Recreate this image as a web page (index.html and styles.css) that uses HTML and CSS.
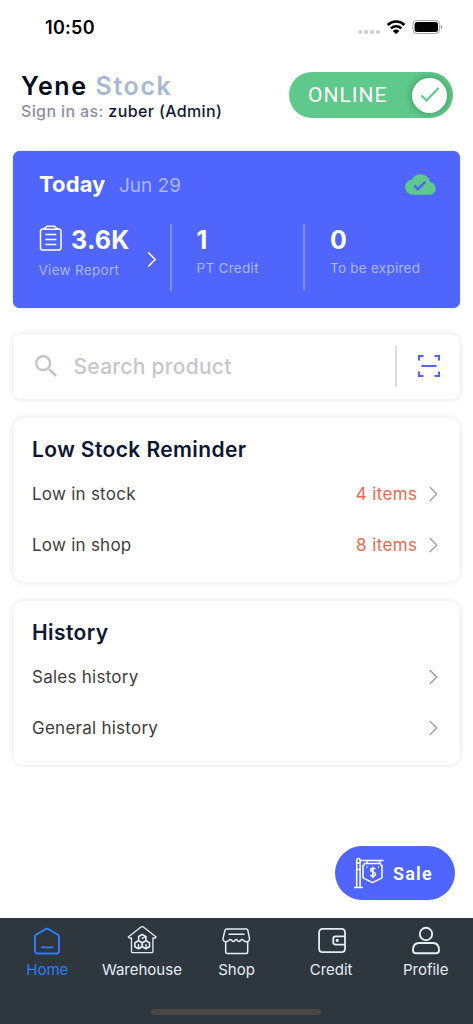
FILE: index.html
```html
<!DOCTYPE html>
<html lang="en">
<head>
<meta charset="utf-8">
<meta name="viewport" content="width=device-width, initial-scale=1">
<title>Yene Stock</title>
<link rel="stylesheet" href="styles.css">
</head>
<body>
<div class="app">
  <div class="status">
    <span class="clock">10:50</span>
    <svg class="status-icons" width="86" height="18" viewBox="0 0 86 18">
      <g fill="#cdcdcd"><circle cx="2.3" cy="14" r="2.1"/><circle cx="8.2" cy="14" r="2.1"/><circle cx="14.1" cy="14" r="2.1"/><circle cx="20" cy="14" r="2.1"/></g>
      <g fill="none" stroke="#000" stroke-width="2.5"><path d="M29.8 7a11.8 11.8 0 0 1 16.600 0"/><path d="M32.900 10.300a7.400 7.400 0 0 1 10.400 0"/></g>
      <path d="M34.800 12.900a4.700 4.700 0 0 1 6.600 0l-3.300 3.200z"/>
      <rect x="54.900" y="2.500" width="26.800" height="13" rx="4" fill="none" stroke="#a5a5a5"/>
      <rect x="56.600" y="4.100" width="23.400" height="9.800" rx="2.500"/>
      <path d="M83 7c1.700.6 1.700 3.400 0 4z" fill="#8a8a8a"/>
    </svg>
  </div>

  <header class="header">
    <div>
      <h1 class="brand">Yene <span>Stock</span></h1>
      <p class="account">Sign in as: <b>zuber (Admin)</b></p>
    </div>
    <div class="toggle">
      <span>ONLINE</span>
      <div class="knob"><svg width="22" height="20" viewBox="0 0 22 20"><path d="M2.500 10.500l5 5L19.500 3" fill="none" stroke="#5fc88b" stroke-width="2.100"/></svg></div>
    </div>
  </header>

  <section class="today">
    <div class="today-head">
      <h2>Today</h2><span class="date">Jun 29</span>
      <svg class="cloud" width="31" height="21" viewBox="0 4 24 16"><path fill="#5fc88b" d="M19.350 10.040A7.490 7.490 0 0 0 12 4 7.490 7.490 0 0 0 5.350 8.040 5.990 5.990 0 0 0 0 14a6 6 0 0 0 6 6h13a5 5 0 0 0 .35-9.960zM10 17l-3.500-3.500 1.410-1.410L10 14.170l5.180-5.170 1.410 1.410z"/></svg>
    </div>
    <div class="stats">
      <div class="stat report">
        <div class="report-value">
          <svg width="24" height="27" viewBox="0 0 24 27" fill="none" stroke="#fff" stroke-width="1.500"><path d="M5.500 4H3.700A2.200 2.200 0 0 0 1.500 6.200v16.600A2.200 2.200 0 0 0 3.700 25h16.100a2.200 2.200 0 0 0 2.200-2.200V6.200A2.200 2.200 0 0 0 19.800 4H18"/><path d="M5.500 4.200v-.7q0-1 1.500-1l1-1.200h7.500l1 1.200q1.500 0 1.500 1v.7z"/><path d="M6.300 9.500h11M6.300 14.500h11M6.300 19.500h11"/></svg>
          <strong class="k">3.6K</strong>
        </div>
        <span class="cap view">View Report</span>
      </div>
      <svg class="go" width="10" height="17" viewBox="0 0 10 17"><path d="M1.300 1.500l6.900 7-6.900 7" fill="none" stroke="#fff" stroke-width="1.500"/></svg>
      <div class="stat credit"><strong>1</strong><span class="cap">PT Credit</span></div>
      <div class="stat expired"><strong>0</strong><span class="cap">To be expired</span></div>
    </div>
  </section>

  <div class="search">
    <svg width="22" height="22" viewBox="3 3 17.500 17.500"><path fill="#c4c4c8" d="M15.500 14h-.79l-.28-.27A6.471 6.471 0 0 0 16 9.500 6.500 6.500 0 1 0 9.500 16c1.610 0 3.090-.59 4.230-1.570l.27.28v.79l5 4.990L20.490 19zm-6 0C7.010 14 5 11.990 5 9.500S7.010 5 9.500 5 14 7.010 14 9.500 11.990 14 9.500 14z"/></svg>
    <span class="placeholder">Search product</span>
    <div class="scan"><svg width="24" height="24" viewBox="0 0 24 24" fill="none" stroke="#4f65fc" stroke-width="2"><path d="M2 6.500V2h4.500M17.500 2H22v4.500M22 17.500V22h-4.500M6.500 22H2v-4.500M4.500 12h15"/></svg></div>
  </div>

  <section class="card">
    <h3>Low Stock Reminder</h3>
    <div class="row"><span>Low in stock</span><em>4 items</em><svg width="9" height="16" viewBox="0 0 9 16"><path d="M.8 1l7 7-7 7"/></svg></div>
    <div class="row"><span>Low in shop</span><em>8 items</em><svg width="9" height="16" viewBox="0 0 9 16"><path d="M.8 1l7 7-7 7"/></svg></div>
  </section>

  <section class="card">
    <h3 class="history">History</h3>
    <div class="row"><span>Sales history</span><svg width="9" height="16" viewBox="0 0 9 16"><path d="M.8 1l7 7-7 7"/></svg></div>
    <div class="row"><span>General history</span><svg width="9" height="16" viewBox="0 0 9 16"><path d="M.8 1l7 7-7 7"/></svg></div>
  </section>

  <div class="sale">
    <svg width="32" height="32" viewBox="0 0 32 32" fill="none" stroke="#fff" stroke-width="1.500"><path d="M3.700 30V3.500q0-2 1.700-2t1.700 2V30M1 30.500h9M3.700 6h3.400M3.700 12.500h3.400M7 3.500h23.500M14 3.500v3M26.500 3.500v3"/><path d="M11.500 6.500h16q0 2 1.500 2v12.300l-9.500 4.800-9.500-4.800V8.500q1.500 0 1.500-2z"/><path d="M22.300 12.200c-1-1.500-4.700-1.500-4.700.8 0 2.500 4.900 1.500 4.900 4.200 0 2.300-4 2.500-5.100.7M19.900 9.800v11.500"/><path d="M13.500 10h1M25 10h1"/></svg>
    <span>Sale</span>
  </div>

  <nav class="tabs">
    <div class="tab active"><svg width="30" height="30" viewBox="0 0 30 30" stroke-width="1.900"><path d="M3 10.500q0-1.200 1-1.800L13.700 3.100q1.300-.7 2.600 0L26 8.700q1 .6 1 1.800V25q0 2.500-2.500 2.500h-19Q3 27.500 3 25zM10 21.400h10.500"/></svg><span>Home</span></div>
    <div class="tab"><svg width="30" height="30" viewBox="0 0 30 30" stroke-width="1.300"><path d="M4.500 12v13.500q0 1.200 1.200 1.200h19q1.200 0 1.200-1.200V12l2.200.2 1-1.200L16.400 1q-1.200-.8-2.400 0L1.300 11l1 1.200z"/><path d="M15.200 8.500l3.700 2v4.200l-3.700 2.100-3.600-2.100v-4.200zM11.500 14.800l3.600 2v4l-3.600 2-3.600-2v-4zM18.900 14.800l3.600 2v4l-3.600 2-3.600-2v-4z" stroke-width="1.600"/><path d="M11.500 18.500v4l3.500-2M18.900 18.500v4l3.500-2M15.200 12.400l3.500-1.800" stroke-width="1.400"/></svg><span>Warehouse</span></div>
    <div class="tab"><svg width="30" height="30" viewBox="0 0 30 30" stroke-width="1.500"><path d="M5.700 3h19.600q1.200 0 1.500 1.200l1.700 8.200q0 3.400-3.300 3.400c-2.300 0-2.800-2.200-4.200-2.200s-1.500 2-3 2-1.500-2-2.800-2-1.400 2-2.900 2-1.600-2-3-2-1.900 2.200-4 2.200q-3.300 0-3.300-3.400l2-8.200Q4.500 3 5.700 3zM4.700 15.700V26q0 1.500 1.500 1.500h19q1.500 0 1.500-1.500V15.700M8 8.200h15"/></svg><span>Shop</span></div>
    <div class="tab"><svg width="30" height="30" viewBox="-1 0 30 30" stroke-width="1.800"><path d="M28 9.700V6.500q0-3.600-3.600-3.600H5.700Q2.100 2.900 2.100 6.500v15.900q0 3.700 3.600 3.700h18.700q3.600 0 3.600-3.700v-3.700M28 10.300H18.700q-2.500 0-2.500 2.500v3.300q0 2.500 2.500 2.500H28M28 9.700v9"/><circle cx="20.200" cy="14.400" r=".7" fill="currentColor"/></svg><span>Credit</span></div>
    <div class="tab"><svg width="30" height="30" viewBox="0.5 0 30 30" stroke-width="1.900"><circle cx="15.500" cy="8" r="6.200"/><path d="M8.500 17h14q6 0 6 7.500 0 2.700-2.800 2.700H5.300q-2.800 0-2.800-2.700 0-7.500 6-7.500z"/></svg><span>Profile</span></div>
    <div class="home-bar"></div>
  </nav>
</div>
</body>
</html>
```
FILE: styles.css
```css
* { box-sizing: border-box; }
body { margin: 0; background: #fff; font-family: Inter, "Liberation Sans", sans-serif; }
h1, h2, h3, p { margin: 0; }
svg { display: block; flex: none; }
span, strong, em { white-space: nowrap; }

.app { width: 473px; height: 1024px; display: flex; flex-direction: column; overflow: hidden; position: relative; }

.status { height: 54px; padding: 0 29px 0 45px; display: flex; justify-content: space-between; align-items: center; }
.clock { font-size: 18px; font-weight: 600; letter-spacing: .3px; color: #000; }

.header { height: 97px; padding: 18px 20px 0 21px; display: flex; justify-content: space-between; align-items: flex-start; }
.brand { font-size: 25px; line-height: 28px; font-weight: 600; letter-spacing: 1.600px; color: #060c1d; }
.brand span { color: #a9b8d1; }
.account { font-size: 16px; line-height: 22px; font-weight: 500; letter-spacing: .37px; color: #8a8ea6; white-space: nowrap; }
.account b { font-weight: 500; color: #10193a; }
.toggle { width: 164px; height: 46px; border-radius: 23px; background: #5fc88b; display: flex; align-items: center; justify-content: space-between; padding: 0 6px 0 19px; color: #fff; font: 400 21px Roboto, sans-serif; letter-spacing: 1px; }
.knob { width: 35px; height: 35px; border-radius: 50%; background: #fff; box-shadow: 0 0 8px rgba(0,0,0,.3); display: flex; align-items: center; justify-content: center; }

.today { flex: none; margin: 0 13px; height: 157px; border-radius: 7px; background: #4f65fc; color: #fff; padding: 18px 24.500px 0 26px; box-shadow: 0 0 1px #4f65fc; }
.today-head { height: 30px; display: flex; align-items: center; }
.today h2 { font-size: 22px; font-weight: 700; line-height: 30px; letter-spacing: .1px; }
.date { margin: 2px auto 0 13.500px; font-size: 19px; color: #abb6fe; }
.stats { display: flex; margin-top: 25px; height: 67px; }
.stat { display: flex; flex-direction: column; }
.stat strong { font-size: 25px; line-height: 32px; font-weight: 700; }
.report { width: 108px; }
.report .k { letter-spacing: .3px; }
.report-value { display: flex; gap: 8px; align-items: center; height: 32px; }
.report-value svg { margin-top: -4px; }
.go { margin: 27px 13px 0 0; }
.cap { font-size: 13.500px; line-height: 24px; letter-spacing: .3px; color: #abb6fe; }
.view { margin: 2px 0 0 -.5px; }
.credit { width: 133px; border-left: 2px solid #7d8dfd; padding-left: 24.500px; }
.expired { border-left: 2px solid #7d8dfd; padding-left: 25px; }
.expired .cap { letter-spacing: .25px; }

.search { flex: none; margin: 26px 13px 0; height: 65px; border-radius: 8px; box-shadow: 0 0 5px rgba(0,0,0,.13); display: flex; align-items: center; padding: 0 19px 1px 22px; }
.placeholder { margin-left: 16.500px; font-size: 21px; font-weight: 500; letter-spacing: .27px; color: #c6c6ca; }
.scan { margin-left: auto; height: 41px; border-left: 2px solid #dcdce4; padding-left: 20px; display: flex; align-items: center; }

.card { flex: none; height: 164px; margin: 19px 13px 0; border-radius: 10px; box-shadow: 0 0 5px rgba(0,0,0,.13); padding: 16px 22.500px 0 19px; }
.card h3 { font-size: 21px; line-height: 32px; font-weight: 600; letter-spacing: .4px; color: #0d1635; }
.card h3 + .row { margin-top: 3px; }
.row { height: 50.500px; display: flex; align-items: center; font-size: 17px; letter-spacing: .25px; color: #3d3d3d; }
.row span { margin-right: auto; }
.row em { font-style: normal; letter-spacing: .4px; color: #f1674a; margin-right: 11px; }
.row svg { fill: none; stroke: #999; stroke-width: 1.200; }

.sale { position: absolute; left: 335px; top: 846px; width: 120px; height: 54px; border-radius: 27px; background: #4f65fc; color: #fff; display: flex; align-items: center; gap: 8px; padding-left: 18px; font: 600 18px Roboto, sans-serif; letter-spacing: 1.200px; }

.tabs { margin-top: auto; height: 106px; flex: none; background: #2e373e; display: grid; grid-template-columns: repeat(5, 1fr); align-content: start; color: #e4edf7; }
.tab { display: flex; flex-direction: column; align-items: center; padding-top: 8px; height: 91px; font-size: 15px; line-height: 28px; }
.tab svg { fill: none; stroke: currentColor; stroke-linejoin: round; stroke-linecap: round; }
.active { color: #2e7dfa; }
.home-bar { grid-column: 1 / -1; justify-self: center; width: 170px; height: 6px; border-radius: 3px; background: #4a4745; }
```
